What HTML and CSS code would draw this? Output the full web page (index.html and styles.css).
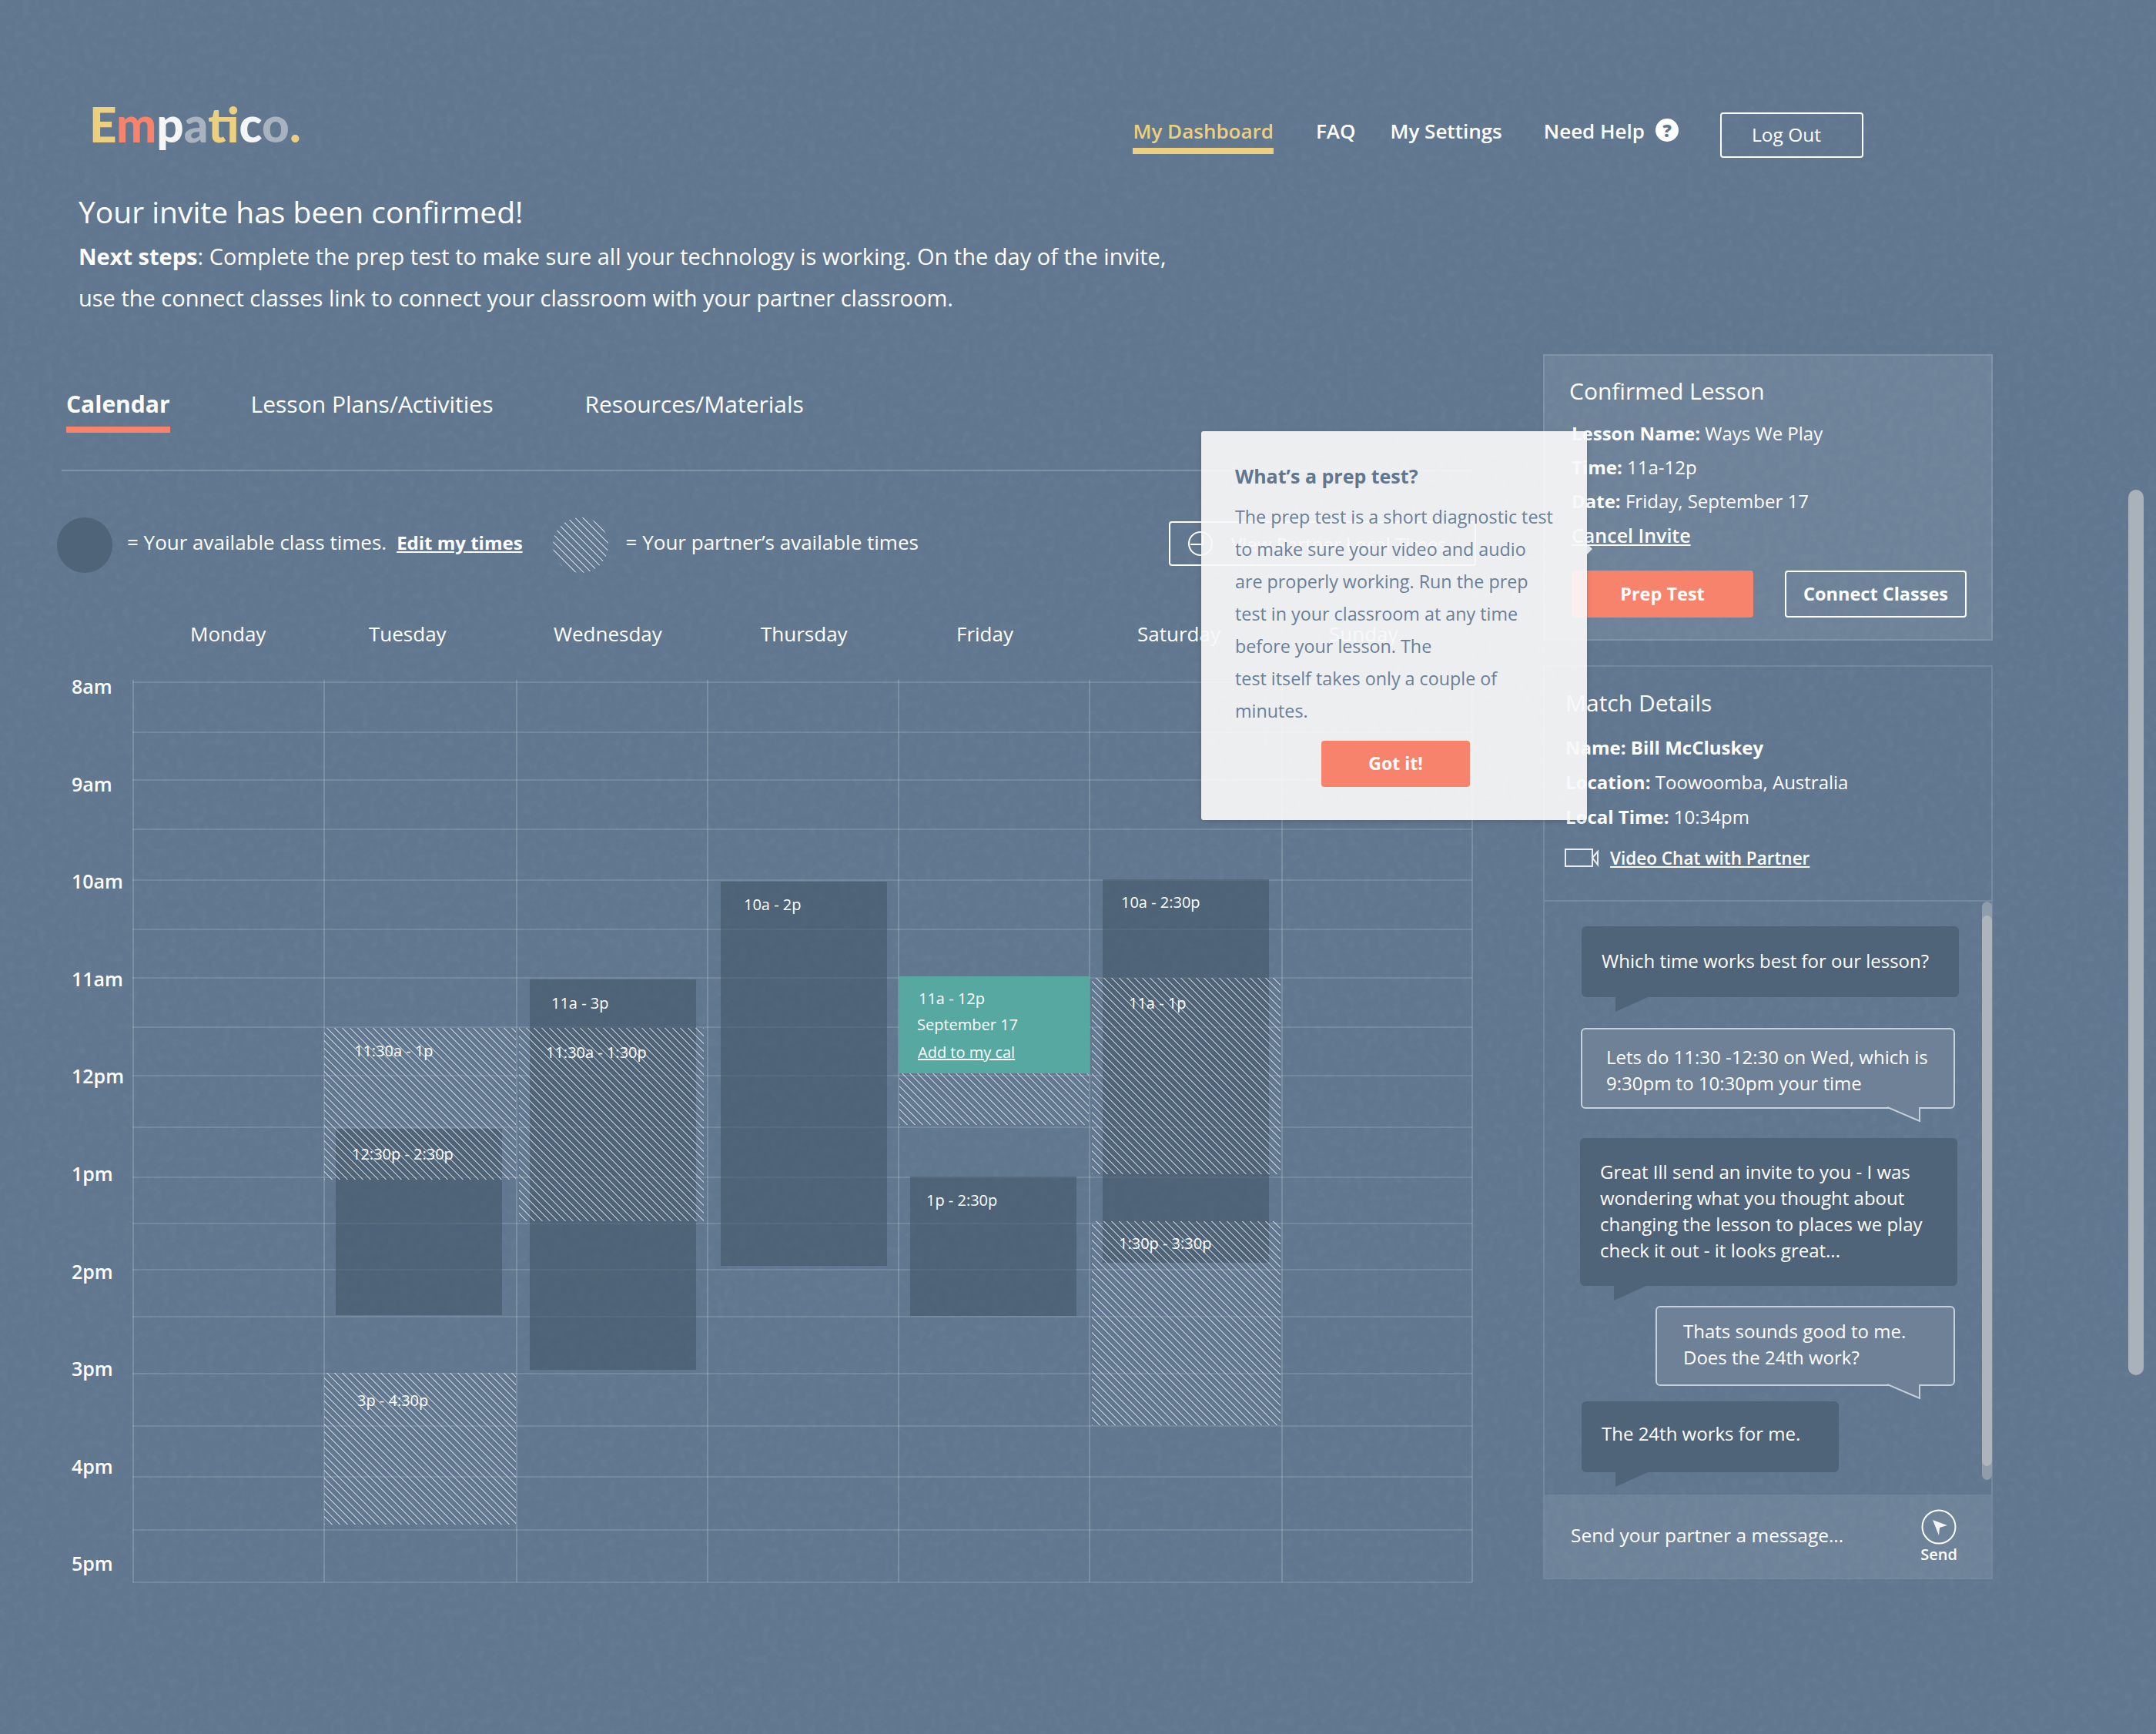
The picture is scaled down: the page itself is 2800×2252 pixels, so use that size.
FILE: index.html
```html
<!DOCTYPE html>
<html lang="en">
<head>
  <meta charset="UTF-8">
  <title>Empatico - My Dashboard</title>
  <link rel="stylesheet" href="styles.css">
</head>
<body>
<div class="page">
  <svg class="grain" width="2800" height="2252" aria-hidden="true">
    <filter id="grain">
      <feTurbulence type="fractalNoise" baseFrequency="0.1" numOctaves="3" seed="4"/>
      <feColorMatrix values="0 0 0 0 1  0 0 0 0 1  0 0 0 0 1  0.5 0 0 0 -0.2"/>
    </filter>
    <rect width="2800" height="2252" filter="url(#grain)" opacity="0.14"/>
  </svg>

  <header class="topbar">
    <div class="logo"><span class="c-yellow">E</span><span class="c-coral">m</span><span class="c-white">p</span><span class="c-grey">a</span><span class="c-yellow">t</span><span class="c-coral">i</span><span class="c-white">c</span><span class="c-grey">o</span><span class="c-yellow">.</span></div>
    <nav class="nav">
      <a class="nav-dash">My Dashboard</a>
      <a class="nav-faq">FAQ</a>
      <a class="nav-settings">My Settings</a>
      <a class="nav-help">Need Help <span class="help-dot">?</span></a>
      <a class="logout">Log Out</a>
    </nav>
  </header>

  <section class="intro">
    <h1>Your invite has been confirmed!</h1>
    <p><b>Next steps</b>: Complete the prep test to make sure all your technology is working. On the day of the invite,<br>use the connect classes link to connect your classroom with your partner classroom.</p>
  </section>

  <main class="main">
    <div class="left">
      <div class="tabs">
        <a class="tab tab-active">Calendar</a>
        <a class="tab tab-plans">Lesson Plans/Activities</a>
        <a class="tab tab-res">Resources/Materials</a>
      </div>

      <div class="legend">
        <span class="dot dot-mine"></span>
        <span class="legend-text">= Your available class times.</span>
        <a class="edit-link">Edit my times</a>
        <span class="dot dot-partner"></span>
        <span class="legend-text legend-partner">= Your partner’s available times</span>
        <a class="local-btn">
          <svg width="34" height="34" viewBox="0 0 34 34" fill="none" stroke="#fff" stroke-width="2"><circle cx="17" cy="17" r="15"/><path d="M20 6v12H4"/></svg>
          View Partner Local Times
        </a>
      </div>

      <div class="days">
        <span>Monday</span><span>Tuesday</span><span>Wednesday</span><span>Thursday</span><span>Friday</span><span>Saturday</span><span>Sunday</span>
      </div>

      <div class="calendar">
        <div class="hours">
          <span>8am</span><span>9am</span><span>10am</span><span>11am</span><span>12pm</span><span>1pm</span><span>2pm</span><span>3pm</span><span>4pm</span><span>5pm</span>
        </div>
        <div class="grid">
          <div class="rows">
            <i></i><i></i><i></i><i></i><i></i><i></i><i></i><i></i><i></i><i></i><i></i><i></i><i></i><i></i><i></i><i></i><i></i><i></i>
          </div>
          <div class="cols">
            <i></i><i></i><i></i><i></i><i></i><i></i><i></i>
          </div>

          <div class="ev mine tue-mine">12:30p - 2:30p</div>
          <div class="ev mine wed-mine">11a - 3p</div>
          <div class="ev mine thu-mine">10a - 2p</div>
          <div class="ev mine fri-mine">1p - 2:30p</div>
          <div class="ev mine sat-mine">10a - 2:30p</div>

          <div class="ev partner tue-one">11:30a - 1p</div>
          <div class="ev partner tue-two">3p - 4:30p</div>
          <div class="ev partner wed-one">11:30a - 1:30p</div>
          <div class="ev partner fri-one"></div>
          <div class="ev partner sat-one">11a - 1p</div>
          <div class="ev partner sat-two">1:30p - 3:30p</div>

          <div class="ev booked">
            <div class="booked-time">11a - 12p</div>
            <div class="booked-date">September 17</div>
            <a class="booked-link">Add to my cal</a>
          </div>
        </div>
      </div>
    </div>

    <aside class="side">
      <section class="panel confirmed">
        <h2>Confirmed Lesson</h2>
        <div class="facts">
          <div><b>Lesson Name:</b> Ways We Play</div>
          <div><b>Time:</b> 11a-12p</div>
          <div><b>Date:</b> Friday, September 17</div>
          <div><a class="strong-link">Cancel Invite</a></div>
        </div>
        <div class="actions">
          <a class="btn btn-coral">Prep Test</a>
          <a class="btn btn-line">Connect Classes</a>
        </div>
      </section>

      <section class="panel match">
        <h2>Match Details</h2>
        <div class="facts facts-match">
          <div><b>Name: Bill McCluskey</b></div>
          <div><b>Location:</b> Toowoomba, Australia</div>
          <div><b>Local Time:</b> 10:34pm</div>
        </div>
        <a class="video-link">
          <svg width="45" height="26" viewBox="0 0 45 26" fill="none" stroke="#e8edf2" stroke-width="2"><rect x="2" y="2" width="35" height="22"/><path d="M37 13l7-8v17z"/></svg>
          <span class="strong-link">Video Chat with Partner</span>
        </a>
      </section>

      <section class="panel chat">
        <div class="messages">
          <div class="bubble them msg-a">Which time works best for our lesson?</div>
          <div class="bubble me msg-b">Lets do 11:30 -12:30 on Wed, which is<br>9:30pm to 10:30pm your time
            <svg class="tail" width="44" height="22" viewBox="0 0 44 22"><path d="M0 2l42 18V2" fill="#6e8197" stroke="#c6d0da" stroke-width="2"/></svg>
          </div>
          <div class="bubble them msg-c">Great Ill send an invite to you - I was<br>wondering what you thought about<br>changing the lesson to places we play<br>check it out - it looks great...</div>
          <div class="bubble me msg-d">Thats sounds good to me.<br>Does the 24th work?
            <svg class="tail" width="44" height="22" viewBox="0 0 44 22"><path d="M0 2l42 18V2" fill="#6e8197" stroke="#c6d0da" stroke-width="2"/></svg>
          </div>
          <div class="bubble them msg-e">The 24th works for me.</div>
          <div class="chat-track"><div class="chat-thumb"></div></div>
        </div>
        <div class="compose">
          <span class="compose-text">Send your partner a message...</span>
          <a class="send">
            <svg width="46" height="46" viewBox="0 0 46 46"><circle cx="23" cy="23" r="21.5" fill="none" stroke="#fff" stroke-width="2"/><path d="M15 14l19 7-10 3-1 10z" fill="#f2f4f6"/></svg>
            <span>Send</span>
          </a>
        </div>
      </section>
    </aside>
  </main>

  <div class="popup">
    <h3>What’s a prep test?</h3>
    <p>The prep test is a short diagnostic test<br>to make sure your video and audio<br>are properly working. Run the prep<br>test in your classroom at any time<br>before your lesson. The<br>test itself takes only a couple of<br>minutes.</p>
    <a class="got-it">Got it!</a>
  </div>

  <div class="page-scroll"></div>
</div>
</body>
</html>
```

FILE: styles.css
```css
html, body {
  margin: 0;
  padding: 0;
  background: #60778f;
}
.page {
  position: relative;
  width: 2800px;
  height: 2252px;
  overflow: hidden;
  background: #60778f;
  color: #fff;
  font-family: "Open Sans", "Liberation Sans", sans-serif;
  font-size: 24px;
}
.grain {
  position: absolute;
  left: 0;
  top: 0;
}
.topbar, .intro, .main {
  position: relative;
}
a { color: inherit; }

/* header */
.topbar {
  display: flex;
  justify-content: space-between;
  height: 230px;
  padding: 0 380px 0 116px;
  box-sizing: border-box;
}
.logo {
  font-family: Lato, "Open Sans", sans-serif;
  font-weight: 900;
  font-size: 62px;
  line-height: 70px;
  margin-top: 126px;
  height: 70px;
}
.c-yellow { color: #edcf80; }
.c-coral { color: #f7836d; }
.c-white { color: #f4f5f7; }
.c-grey { color: #a9b3bf; }
.nav {
  display: flex;
  align-items: flex-start;
  font-weight: 600;
  font-size: 26px;
  padding-top: 146px;
}
.nav a { display: block; line-height: 49px; }
.nav-dash {
  color: #edcf80;
  height: 46px;
  border-bottom: 8px solid #edcf80;
}
.nav-faq { margin-left: 55px; }
.nav-settings { margin-left: 45px; }
.nav-help { margin-left: 54px; display: flex !important; gap: 14px; }
.help-dot {
  display: inline-block;
  width: 30px;
  height: 30px;
  margin-top: 8px;
  border-radius: 50%;
  background: #fff;
  color: #60778f;
  font-weight: 800;
  font-size: 23px;
  line-height: 30px;
  text-align: center;
}
.nav .logout {
  width: 186px;
  height: 59px;
  margin-left: 54px;
  padding-left: 39px;
  box-sizing: border-box;
  border: 2px solid #fff;
  border-radius: 4px;
  font-weight: 400;
  font-size: 24.5px;
  line-height: 54px;
}

/* intro */
.intro { margin-left: 102px; }
.intro h1 {
  margin: 20px 0 0;
  font-weight: 400;
  font-size: 39px;
  line-height: 50px;
}
.intro p {
  margin: 6px 0 0;
  font-size: 29px;
  line-height: 54px;
}

/* two columns */
.main {
  display: flex;
  margin-top: 46px;
  padding-left: 74px;
}
.left { width: 1843px; }
.side { width: 584px; margin-left: 87px; }

/* tabs */
.tabs {
  display: flex;
  align-items: flex-start;
  height: 152px;
  margin-left: 6px;
  width: 1832px;
  padding: 40px 0 0 6px;
  box-sizing: border-box;
  border-bottom: 2px solid rgba(255, 255, 255, 0.2);
  font-size: 30px;
}
.tab { line-height: 50px; }
.tab-active {
  height: 54px;
  font-weight: 700;
  border-bottom: 8px solid #f7836d;
}
.tab-plans { margin-left: 105px; }
.tab-res { margin-left: 119px; }

/* legend */
.legend {
  display: flex;
  align-items: center;
  height: 72px;
  margin-top: 60px;
  font-size: 26px;
}
.dot {
  width: 72px;
  height: 72px;
  border-radius: 50%;
  flex: none;
}
.dot-mine { background: #4f6479; }
.dot-partner {
  margin-left: 39px;
  background: repeating-linear-gradient(45deg, rgba(255, 255, 255, 0.55) 0 1.2px, transparent 1.2px 7.07px);
}
.legend-text { margin: 0 0 8px 19px; }
.legend-partner { margin-left: 23px; }
.edit-link {
  margin: 0 0 8px 13px;
  font-weight: 700;
  font-size: 24px;
  text-decoration: underline;
}
.local-btn {
  display: flex;
  align-items: center;
  gap: 23px;
  width: 399px;
  height: 58px;
  margin: 0 0 4px auto;
  padding-left: 22px;
  box-sizing: border-box;
  border: 2px solid #fff;
  border-radius: 4px;
  font-size: 24px;
  white-space: nowrap;
}

/* calendar */
.days {
  display: grid;
  grid-template-columns: 232px 240px 269px 254px 235px 249px 100px;
  padding-left: 173px;
  margin-top: 48px;
  height: 62px;
  line-height: 62px;
  font-size: 26px;
}
.calendar {
  display: flex;
  margin-top: 31px;
}
.hours {
  display: flex;
  flex-direction: column;
  width: 98px;
  margin-top: -9px;
  flex: none;
}
.hours span {
  display: block;
  height: 126.6px;
  line-height: 30px;
  padding-left: 19px;
  font-weight: 600;
  font-size: 25px;
}
.grid {
  position: relative;
  width: 1740px;
  height: 1169px;
}
.rows {
  display: grid;
  grid-template-rows: 65px 62px 64px 66px 64px 63px 64px 63px 67px 65px 60px 60px 61px 74px 68px 66px 69px 68px;
  border-bottom: 2px solid rgba(255, 255, 255, 0.13);
}
.rows i {
  display: block;
  border-top: 2px solid rgba(255, 255, 255, 0.13);
}
.cols {
  position: absolute;
  left: 0;
  top: -2px;
  bottom: -1px;
  display: grid;
  grid-template-columns: 248px 250px 248px 248px 248px 250px 247px;
  border-right: 2px solid rgba(255, 255, 255, 0.17);
}
.cols i {
  display: block;
  border-left: 2px solid rgba(255, 255, 255, 0.17);
}

/* events sit over the grid at their time */
.ev {
  position: absolute;
  box-sizing: border-box;
  font-size: 20px;
  line-height: 30px;
  white-space: nowrap;
}
.mine {
  width: 216px;
  background: rgba(67, 86, 104, 0.6);
}
.partner {
  background: repeating-linear-gradient(45deg, rgba(255, 255, 255, 0.5) 0 1.3px, transparent 1.3px 7.07px);
}
.tue-mine { left: 264px; top: 581px; height: 242px; padding: 18px 0 0 21px; z-index: 2; }
.wed-mine { left: 516px; top: 387px; height: 507px; padding: 16px 0 0 28px; }
.thu-mine { left: 764px; top: 260px; height: 499px; padding: 15px 0 0 30px; }
.fri-mine { left: 1010px; top: 643px; height: 181px; padding: 16px 0 0 21px; }
.sat-mine { left: 1260px; top: 257px; height: 498px; padding: 15px 0 0 24px; }
.tue-one { left: 249px; top: 450px; width: 249px; height: 197px; padding: 15px 0 0 39px; z-index: 3; }
.tue-two { left: 249px; top: 898px; width: 249px; height: 197px; padding: 21px 0 0 43px; }
.wed-one { left: 502px; top: 450px; width: 240px; height: 251px; padding: 17px 0 0 35px; }
.fri-one { left: 996px; top: 509px; width: 246px; height: 67px; }
.sat-one { left: 1246px; top: 385px; width: 245px; height: 255px; padding: 18px 0 0 48px; }
.sat-two { left: 1246px; top: 701px; width: 245px; height: 265px; padding: 14px 0 0 35px; }
.booked {
  left: 995px;
  top: 383px;
  width: 248px;
  height: 126px;
  padding: 14px 0 0 24px;
  background: #56a8a0;
}
.booked-time { margin-left: 2px; height: 34px; }
.booked-date { height: 36px; }
.booked-link { margin-left: 1px; text-decoration: underline; }

/* right column */
.panel {
  box-sizing: border-box;
  border: 2px solid rgba(255, 255, 255, 0.13);
}
.panel h2 {
  margin: 0;
  font-weight: 400;
  font-size: 30px;
  line-height: 40px;
}
.confirmed {
  height: 372px;
  padding: 26px 0 0 35px;
  background: rgba(255, 255, 255, 0.09);
}
.confirmed h2 { margin-left: -3px; }
.facts { margin-top: 13px; line-height: 44px; }
.strong-link { font-weight: 600; font-size: 25px; text-decoration: underline; }
.actions {
  display: flex;
  gap: 41px;
  margin-top: 23px;
}
.btn {
  display: block;
  width: 236px;
  height: 61px;
  box-sizing: border-box;
  border-radius: 4px;
  font-weight: 700;
  font-size: 23.5px;
  text-align: center;
}
.btn-coral { background: #f7836d; line-height: 60px; }
.btn-line { border: 2px solid #fff; line-height: 56px; }
.match {
  height: 305px;
  margin-top: 32px;
  padding: 27px 0 0 27px;
  border-bottom: 0;
}
.facts-match { margin-top: 15px; line-height: 45px; }
.video-link {
  display: flex;
  align-items: center;
  gap: 15px;
  height: 44px;
  margin: 9px 0 0 -2px;
}
.video-link .strong-link { font-size: 22.5px; }

/* chat */
.chat {
  height: 882px;
  border-top: 2px solid rgba(255, 255, 255, 0.13);
}
.messages {
  position: relative;
  display: flex;
  flex-direction: column;
  align-items: flex-start;
  height: 770px;
  padding-top: 32px;
  box-sizing: border-box;
  line-height: 34px;
}
.bubble {
  position: relative;
  box-sizing: border-box;
  border-radius: 6px;
  flex: none;
  white-space: nowrap;
}
.them { background: #4f6479; }
.them::after {
  content: "";
  position: absolute;
  left: 44px;
  top: 100%;
  width: 42px;
  height: 19px;
  background: #4f6479;
  clip-path: polygon(0 0, 100% 0, 0 100%);
}
.me {
  background: #6e8197;
  border: 2px solid #c6d0da;
}
.tail {
  position: absolute;
  right: 42px;
  top: 100%;
  margin-top: -2px;
}
.msg-a { margin-left: 48px; width: 490px; height: 92px; padding: 28px 0 0 26px; }
.msg-b { margin: 40px 0 0 47px; width: 486px; height: 105px; padding: 19px 0 0 31px; }
.msg-c { margin: 38px 0 0 46px; width: 490px; height: 192px; padding: 27px 0 0 26px; }
.msg-d { margin: 26px 0 0 144px; width: 389px; height: 104px; padding: 14px 0 0 34px; }
.msg-e { margin: 20px 0 0 48px; width: 334px; height: 92px; padding: 25px 0 0 26px; }
.chat-track {
  position: absolute;
  right: -1px;
  top: 0;
  width: 13px;
  height: 751px;
  border-radius: 7px;
  background: #8e9cac;
}
.chat-thumb {
  height: 715px;
  margin-top: 18px;
  border-radius: 7px;
  background: #aeb4bb;
}
.compose {
  display: flex;
  align-items: center;
  justify-content: space-between;
  height: 108px;
  padding: 0 44px 0 34px;
  background: rgba(255, 255, 255, 0.09);
}
.compose-text { font-size: 24.5px; margin-top: -4px; }
.send {
  display: flex;
  flex-direction: column;
  align-items: center;
  font-weight: 600;
  font-size: 20px;
  line-height: 26px;
  margin-top: 1px;
}

/* popup */
.popup {
  position: absolute;
  left: 1560px;
  top: 560px;
  width: 501px;
  height: 505px;
  padding: 38px 0 0 44px;
  box-sizing: border-box;
  border-radius: 3px;
  background: rgba(248, 248, 248, 0.93);
  color: #6a8098;
  box-shadow: 0 2px 6px rgba(40, 55, 70, 0.25);
}
.popup::after {
  content: "";
  position: absolute;
  left: 100%;
  top: 146px;
  width: 0;
  height: 0;
  border: 7px solid transparent;
  border-left-color: rgba(240, 242, 244, 0.9);
}
.popup h3 {
  margin: 0;
  font-weight: 700;
  font-size: 25px;
  line-height: 40px;
  color: #60778f;
}
.popup p {
  margin: 12px 0 0;
  font-size: 23.3px;
  line-height: 42px;
}
.got-it {
  display: block;
  width: 193px;
  height: 60px;
  margin: 18px 0 0 112px;
  border-radius: 4px;
  background: #f7836d;
  color: #fff;
  font-weight: 700;
  font-size: 23px;
  text-align: center;
  line-height: 58px;
}

.page-scroll {
  position: absolute;
  left: 2764px;
  top: 636px;
  width: 20px;
  height: 1150px;
  border-radius: 10px;
  background: #a9b1ba;
}
```
